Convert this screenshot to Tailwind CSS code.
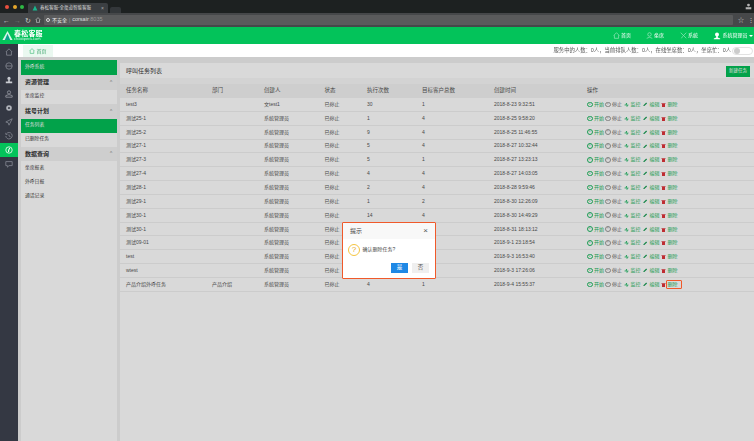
<!DOCTYPE html>
<html lang="en">
  <head>
    <meta charset="UTF-8" />
    <title>春松客服-全渠道智能客服</title>
    <script src="https://cdn.jsdelivr.net/npm/@tailwindcss/browser@4"></script>
  </head>
  <body class="w-[754px] h-[441px] overflow-hidden relative bg-white text-[5px] leading-none text-[#444] blur-[0.35px] font-['Liberation_Sans','Noto_Sans_CJK_SC',sans-serif]">
    <!-- browser tabs -->
    <div class="h-[13px] bg-[#1d2121] flex items-end pl-[4px] relative">
      <div class="absolute left-[5px] top-[5px] flex gap-[3.5px]">
        <span class="size-[4px] rounded-full bg-[#e9503f]"></span>
        <span class="size-[4px] rounded-full bg-[#e5a72b]"></span>
        <span class="size-[4px] rounded-full bg-[#2fb944]"></span>
      </div>
      <div class="ml-[24px] w-[80px] h-[10px] bg-[#3b3f42] rounded-t-[2px] flex items-center px-[4px] text-[#d8d8d8] text-[4.5px]">
        <svg class="size-[6px] mr-[2px]" viewBox="0 0 10 10"><path d="M5 1 9 9H1z" fill="#19b68c" /></svg>
        <span>春松客服-全渠道智能客服</span>
        <span class="ml-auto text-[5px] text-[#aaa]">×</span>
      </div>
      <div class="ml-[2px] w-[11px] h-[6px] bg-[#33373a] rounded-t-[2px]"></div>
      <svg class="absolute right-[2px] top-[3px] size-[7px]" viewBox="0 0 10 10" fill="#b5b5b5"><circle cx="5" cy="3" r="2" /><path d="M1 6h8v3H1z" /></svg>
    </div>
    <!-- address bar -->
    <div class="h-[14px] bg-[#46484a] flex items-center text-[#d0d0d0]">
      <div class="w-[44px] flex items-center justify-around px-[1px] text-[7px]">
        <span>←</span><span class="text-[#777]">→</span><span>↻</span>
        <svg class="size-[6px]" viewBox="0 0 10 10" fill="none" stroke="#d0d0d0"><path d="M1 5 5 1l4 4M2.500 4.500V9h5V4.500" /></svg>
      </div>
      <div class="h-[10px] w-[691px] bg-[#5a5b5c] rounded-[1px] flex items-center px-[2px] text-[5px]">
        <span class="mr-[2px] size-[4px] rounded-full border-[0.5px] border-[#ddd]"></span>
        <span class="text-[#eee]">不安全</span>
        <span class="mx-[2px] text-[#999]">|</span>
        <span class="text-[#ddd] text-[5.500px]">corsair<span class="text-[#999]">:8035</span></span>
      </div>
      <span class="ml-[5px] text-[6px] text-[#ccc]">☆</span>
      <span class="ml-[4px] text-[6px] text-[#ccc]">⋮</span>
    </div>
    <!-- app header -->
    <header class="h-[17px] bg-[#03c35a] flex items-center text-white relative z-20">
      <svg class="ml-[2px] w-[11px] h-[11px]" viewBox="0 0 12 12"><path d="M6 1 11.500 11H.5z" fill="#d6f5e8" /><path d="M6 4 9 11H3z" fill="#0aa38a" /></svg>
      <div class="ml-[1px] flex flex-col">
        <span class="text-[7px] font-bold tracking-[0.2px]">春松客服</span>
        <span class="text-[4px] text-[#d6f5e8] mt-[0.5px]">chatopera.com</span>
      </div>
      <nav class="ml-auto flex items-center text-[5px]">
        <svg class="size-[7px] mr-[1px]" viewBox="0 0 10 10" fill="none" stroke="#d8f7e6" stroke-width=".7"><path d="M1 5 5 1l4 4M2 4.500V9h6V4.500" /></svg>
        <span class="mr-[15px]">首页</span>
        <svg class="size-[7px] mr-[1px]" viewBox="0 0 10 10" fill="none" stroke="#d8f7e6" stroke-width=".7"><circle cx="5" cy="3.500" r="2.500" /><path d="M1 9q4-3 8 0" /></svg>
        <span class="mr-[16px]">坐席</span>
        <svg class="size-[7px] mr-[1px]" viewBox="0 0 10 10" fill="none" stroke="#d8f7e6" stroke-width=".7"><path d="m1 1 8 8M9 1 5 5M2 9l2-3" /></svg>
        <span class="mr-[15.500px]">系统</span>
        <svg class="size-[8px] mr-[1px]" viewBox="0 0 10 10" fill="#fff"><circle cx="5" cy="3" r="2.500" /><path d="M4 5h2v2l3 1v1H1V8l3-1z" /></svg>
        <span>系统管理员</span>
        <span class="ml-[1.500px] mr-[1px] border-x-[2px] border-t-[2px] border-x-transparent border-t-white"></span>
      </nav>
    </header>

    <div class="flex h-[397px]">
      <!-- icon rail -->
      <aside class="w-[18px] shrink-0 bg-[#343843] flex flex-col items-center pt-[1px] relative z-20">
        <div class="h-[14px] flex items-center"><svg class="size-[8px]" viewBox="0 0 10 10" fill="none" stroke="#858993"><path d="M1 5 5 1l4 4M2 4.500V9h6V4.500" /></svg></div>
        <div class="h-[14px] flex items-center"><svg class="size-[8px]" viewBox="0 0 10 10" fill="none" stroke="#858993"><circle cx="5" cy="5" r="4" /><path d="M1 5h8" /></svg></div>
        <div class="h-[14px] flex items-center"><svg class="size-[8px]" viewBox="0 0 10 10" fill="#c9ccd2"><circle cx="5" cy="3" r="2" /><path d="M4 5h2v2h3v2H1V7h3z" /></svg></div>
        <div class="h-[14px] flex items-center"><svg class="size-[8px]" viewBox="0 0 10 10" fill="none" stroke="#9a9da6"><circle cx="5" cy="3" r="2" /><path d="M1 9V7l3-1h2l3 1v2z" /></svg></div>
        <div class="h-[14px] flex items-center"><svg class="size-[8px]" viewBox="0 0 10 10"><circle cx="5" cy="5" r="3.500" fill="#b0b3ba" /><circle cx="5" cy="5" r="1.300" fill="#343843" /></svg></div>
        <div class="h-[14px] flex items-center"><svg class="size-[8px]" viewBox="0 0 10 10" fill="none" stroke="#858993"><path d="M9 1 1 5l3 1 1 3z" /></svg></div>
        <div class="h-[14px] flex items-center"><svg class="size-[8px]" viewBox="0 0 10 10" fill="none" stroke="#858993"><path d="M2 2a4 4 0 1 1-1 3M1 1v2h2M5 3v2l2 1" /></svg></div>
        <div class="h-[14px] w-full bg-[#03c35a] flex items-center justify-center"><svg class="size-[8px]" viewBox="0 0 10 10" fill="none" stroke="#fff"><circle cx="5" cy="5" r="4" /><path d="M6 2.500Q4 5 4.500 7.500" stroke-width="1.400" /></svg></div>
        <div class="h-[14px] flex items-center"><svg class="size-[8px]" viewBox="0 0 10 10" fill="none" stroke="#858993"><path d="M1 2h8v5H5L3 9V7H1z" /></svg></div>
      </aside>

      <div class="flex-1 flex flex-col min-w-0 relative">
        <!-- page tabs -->
        <div class="h-[13px] bg-white flex items-end pl-[5px] relative z-20">
          <div class="w-[30px] h-[12px] bg-[#eaf8f0] flex items-center justify-center text-[5px] text-[#3aa36a]">
            <svg class="size-[6px] mr-[1px]" viewBox="0 0 10 10" fill="none" stroke="#3bb873"><path d="M1 5 5 1l4 4M2 4.500V9h6V4.500" /></svg>首页
          </div>
          <div class="ml-auto h-full flex items-center text-[#555] text-[5.350px] pr-[1px]">
            <span>服务中的人数：0人，当前排队人数：0人，在线坐席数：0人，坐席忙：0人</span>
            <span class="ml-[1px] w-[21px] h-[8px] rounded-full border-[0.5px] border-[#e2e2e2] flex items-center pl-[1px]"><span class="size-[6px] rounded-full bg-[#ccc]"></span></span>
          </div>
        </div>

        <!-- dimmed page below the tabs -->
        <div class="flex-1 bg-[#f0f0f0] pt-[3px] pl-[3px] flex gap-[3px] relative">
          <div class="w-[96px] shrink-0 bg-white flex flex-col text-[4.800px] text-[#444]">
            <div class="h-[15px] bg-[#03bf58] text-white flex items-center pl-[4px]">外呼系统</div>
            <div class="h-[14.500px] bg-[#f3f3f3] flex items-center px-[4px] text-[6px] font-bold text-[#333]">资源管理<span class="ml-auto text-[#999] text-[5px]">⌃</span></div>
            <div class="h-[14.500px] flex items-center pl-[4px]">坐席监控</div>
            <div class="h-[14.500px] bg-[#f3f3f3] flex items-center px-[4px] text-[6px] font-bold text-[#333]">拨号计划<span class="ml-auto text-[#999] text-[5px]">⌃</span></div>
            <div class="h-[14.500px] bg-[#03bf58] text-white flex items-center pl-[4px]">任务列表</div>
            <div class="h-[13.500px] flex items-center pl-[4px]">已删除任务</div>
            <div class="h-[14.500px] bg-[#f3f3f3] flex items-center px-[4px] text-[6px] font-bold text-[#333]">数据查询<span class="ml-auto text-[#999] text-[5px]">⌃</span></div>
            <div class="h-[14.300px] flex items-center pl-[4px]">坐席报表</div>
            <div class="h-[14.300px] flex items-center pl-[4px]">外呼日报</div>
            <div class="h-[14.300px] flex items-center pl-[4px]">通话记录</div>
          </div>

          <div class="flex-1 min-w-0 bg-white flex flex-col">
            <div class="h-[3px] bg-[#f0f0f0]"></div>
            <div class="h-[15px] bg-white flex items-center pl-[6px] pr-[4px]">
              <span class="text-[6px] text-[#333]">呼叫任务列表</span>
              <span class="ml-auto mt-[2px] w-[24px] h-[11px] bg-[#03bf58] text-white text-[4.500px] flex items-center justify-center">新建任务</span>
            </div>
            <div class="h-[6px] bg-[#f8f8f8]"></div>
            <div class="h-[14px] bg-[#f2f2f2] flex items-center pl-[6px] text-[5.500px] text-[#555]">
              <span class="w-[86px]">任务名称</span><span class="w-[52px]">部门</span><span class="w-[60.500px]">创建人</span><span class="w-[42.500px]">状态</span><span class="w-[55px]">执行次数</span><span class="w-[72px]">目标客户总数</span><span class="w-[93px]">创建时间</span><span>操作</span>
            </div>
            <div id="rows"></div>
          </div>
          <!-- backdrop of the dialog -->
          <div class="absolute inset-0 bg-black/15"></div>
        </div>
      </div>
    </div>

    <!-- delete highlight and dialog -->
    <div class="absolute left-[666px] top-[280px] w-[16px] h-[9px] border border-[#f0592a] rounded-[1px] z-30"></div>
    <div class="absolute left-[342px] top-[222px] w-[94px] h-[57px] bg-white border border-[#f0592a] rounded-[1px] z-30 flex flex-col">
      <div class="h-[16px] bg-[#f8f8f8] flex items-center px-[7px] text-[6px] text-[#444]">提示<span class="ml-auto text-[8px] text-[#555]">×</span></div>
      <div class="flex items-center pl-[5px] mt-[4.500px] text-[5px]">
        <span class="size-[12px] rounded-full border border-[#f5c542] text-[#e6a817] text-[8px] flex items-center justify-center">?</span>
        <span class="ml-[2.500px]">确认删除任务?</span>
      </div>
      <div class="flex justify-end gap-[4px] pr-[6px] mt-[7px] text-[5.500px]">
        <span class="w-[17px] h-[10px] bg-[#1e88e5] text-white flex items-center justify-center">是</span>
        <span class="w-[17px] h-[10px] bg-[#efefef] text-[#555] flex items-center justify-center">否</span>
      </div>
    </div>

    <script>
      const tasks = [
        ["test3", "", "文test1", "30", "1", "2018-8-23 9:32:51"],
        ["测试25-1", "", "系统管理员", "1", "4", "2018-8-25 9:58:20"],
        ["测试25-2", "", "系统管理员", "9", "4", "2018-8-25 11:46:55"],
        ["测试27-1", "", "系统管理员", "5", "4", "2018-8-27 10:32:44"],
        ["测试27-3", "", "系统管理员", "5", "1", "2018-8-27 13:23:13"],
        ["测试27-4", "", "系统管理员", "4", "4", "2018-8-27 14:03:05"],
        ["测试28-1", "", "系统管理员", "2", "4", "2018-8-28 9:59:46"],
        ["测试29-1", "", "系统管理员", "1", "2", "2018-8-30 12:26:09"],
        ["测试30-1", "", "系统管理员", "14", "4", "2018-8-30 14:49:29"],
        ["测试30-1", "", "系统管理员", "1", "4", "2018-8-31 18:13:12"],
        ["测试09-01", "", "系统管理员", "1", "4", "2018-9-1 23:18:54"],
        ["test", "", "系统管理员", "1", "4", "2018-9-3 16:53:40"],
        ["wtest", "", "系统管理员", "1", "4", "2018-9-3 17:26:06"],
        ["产品介绍外呼任务", "产品介绍", "系统管理员", "4", "1", "2018-9-4 15:55:37"],
      ];
      const actions = `
        <span class="flex items-center text-[#1fb864]">
          <span class="size-[5.500px] rounded-full border-[0.5px] border-[#1fb864] mr-[1.500px] flex items-center justify-center text-[3.500px]">c</span><span class="w-[11px]">开始</span>
          <span class="size-[5.500px] rounded-full border-[0.5px] border-[#999] text-[#888] mr-[1.500px] flex items-center justify-center text-[3.500px]">×</span><span class="w-[11.500px] text-[#666]">停止</span>
          <svg class="size-[5px] mr-[2px]" viewBox="0 0 10 10" fill="none" stroke="#1fb864" stroke-width="1.500"><path d="M1 6h3l1-4 1 7 1-3h2" /></svg><span class="w-[12px]">监控</span>
          <svg class="size-[4.500px] mr-[2.500px]" viewBox="0 0 10 10" fill="#1a9e55"><path d="M1 9V7l6-6 2 2-6 6z" /></svg><span class="w-[11.500px]">编辑</span>
          <svg class="size-[5px] mr-[1.500px]" viewBox="0 0 10 10" fill="#e0353b"><path d="M1 2h8v1.500H1zM2 4h6v6H2z" /></svg><span>删除</span>
        </span>`;
      document.getElementById("rows").innerHTML = tasks
        .map(
          ([name, dept, owner, runs, total, time]) => `
          <div class="h-[13.850px] bg-white border-b-[0.5px] border-[#f0f0f0] flex items-center pl-[6px] text-[#555] text-[5px]">
            <span class="w-[86px]">${name}</span><span class="w-[52px]">${dept}</span><span class="w-[60.500px]">${owner}</span><span class="w-[42.500px]">已停止</span><span class="w-[55px]">${runs}</span><span class="w-[72px]">${total}</span><span class="w-[93px]">${time}</span>${actions}
          </div>`
        )
        .join("");
    </script>
  </body>
</html>
